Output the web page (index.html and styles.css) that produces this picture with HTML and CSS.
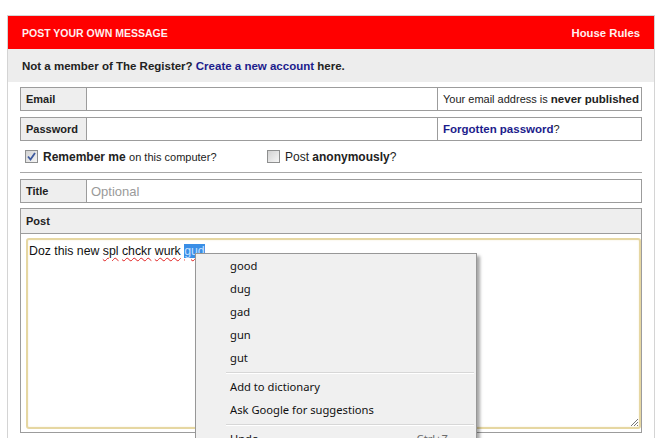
FILE: index.html
```html
<!doctype html>
<html lang="en">
    <head>
        <meta charset="UTF-8" />
        <meta name="viewport" content="width=device-width, initial-scale=1" />

        <link rel="stylesheet" href="styles.css">

        <title>Post your own message</title>
    </head>
    <body>
        <div class="panel">
            <div class="panel-head">
                <span class="head-title">POST YOUR OWN MESSAGE</span>
                <a href="#">House Rules</a>
            </div>
            <div class="member-bar">
                <span>Not a member of The Register? <a href="#">Create a new account</a> here.</span>
            </div>

            <form class="post-form">
                <div class="field-row three">
                    <div class="field-label">Email</div>
                    <div class="field-input"></div>
                    <div class="field-note">
                        <span>Your email address is <b>never published</b></span>
                    </div>
                </div>
                <div class="field-row three">
                    <div class="field-label">Password</div>
                    <div class="field-input"></div>
                    <div class="field-note">
                        <span><a href="#">Forgotten password</a>?</span>
                    </div>
                </div>

                <div class="options">
                    <label class="option">
                        <span class="check checked">
                            <svg width="9" height="9" viewBox="0 0 9 9">
                                <path d="M1 4.5 L3.5 7.5 L8 1" fill="none" stroke="#3e5a9e" stroke-width="1.8" />
                            </svg>
                        </span>
                        <span><b>Remember me</b> <small>on this computer?</small></span>
                    </label>
                    <label class="option">
                        <span class="check"></span>
                        <span>Post <b>anonymously</b>?</span>
                    </label>
                </div>

                <div class="field-row two">
                    <div class="field-label">Title</div>
                    <div class="field-input placeholder">Optional</div>
                </div>

                <div class="post-box">
                    <div class="post-head">Post</div>
                    <div class="post-area">
                        Doz this new <span class="typo">spl</span>
                        <span class="typo">chckr</span>
                        <span class="typo">wurk</span>
                        <span class="typo selected">gud</span>
                        <svg class="grip" width="9" height="9" viewBox="0 0 9 9">
                            <path d="M1 8 L8 1 M4 8 L8 4 M7 8 L8 7" stroke="#777" stroke-width="1" fill="none" />
                        </svg>
                    </div>
                </div>
            </form>
        </div>

        <!-- spellcheck context menu, floats over the textarea -->
        <div class="context-menu">
            <div class="menu-item">good</div>
            <div class="menu-item">dug</div>
            <div class="menu-item">gad</div>
            <div class="menu-item">gun</div>
            <div class="menu-item">gut</div>
            <div class="menu-sep"></div>
            <div class="menu-item">Add to dictionary</div>
            <div class="menu-item">Ask Google for suggestions</div>
            <div class="menu-sep"></div>
            <div class="menu-item"><span>Undo</span><span class="shortcut">Ctrl+Z</span></div>
        </div>
    </body>
</html>
```

FILE: styles.css
```css
html,
body {
    margin: 0;
    padding: 0;
    overflow: hidden;
    background: #fff;
}
body {
    font-family: "Liberation Sans", Arial, sans-serif;
    font-size: 11px;
    color: #222;
}
a {
    color: #1c1c8c;
    text-decoration: none;
}

/* -- PANEL -- */

.panel {
    margin: 15px 0 0 7px;
    width: 646px;
    min-height: 430px;
    border: 1px solid #d4d4d4;
    border-bottom: none;
}
.panel-head {
    height: 33px;
    padding: 0 14px;
    background: #ff0000;
    color: #ffeeee;
    font-weight: bold;
    display: flex;
    align-items: center;
    justify-content: space-between;
}
.head-title {
    font-size: 10.5px;
}
.panel-head a {
    color: #ffeeee;
    font-size: 11.3px;
}
.member-bar {
    height: 33px;
    padding: 0 14px;
    background: #ededed;
    font-size: 11.5px;
    font-weight: bold;
    display: flex;
    align-items: center;
}

/* -- FORM -- */

.post-form {
    padding: 5px 12px 0 12px;
}
.field-row {
    display: grid;
    height: 22px;
    border: 1px solid #9c9c9c;
    margin-bottom: 6px;
}
.field-row.three {
    grid-template-columns: 66px 1fr 204px;
}
.field-row.two {
    grid-template-columns: 66px 1fr;
}
.field-label {
    background: #eeeeee;
    border-right: 1px solid #9c9c9c;
    padding-left: 5px;
    font-weight: bold;
    display: flex;
    align-items: center;
}
.field-input {
    display: flex;
    align-items: center;
    padding-left: 4px;
}
.field-input.placeholder {
    color: #9a9a9a;
    font-size: 13px;
}
.field-note {
    border-left: 1px solid #9c9c9c;
    padding-left: 5px;
    display: flex;
    align-items: center;
    white-space: nowrap;
}
.field-note a {
    font-weight: bold;
    font-size: 11.5px;
}
.field-note b {
    font-size: 11.5px;
}

.options {
    display: grid;
    grid-template-columns: 242px auto;
    height: 31px;
    padding-left: 5px;
    margin-top: -6px;
    margin-bottom: 6px;
    border-bottom: 1px solid #a8a8a8;
    align-items: center;
}
.option {
    display: flex;
    align-items: center;
    gap: 5px;
    font-size: 12px;
}
.option small {
    font-size: 11px;
}
.check {
    width: 11px;
    height: 11px;
    border: 1px solid #8e8f8f;
    background: linear-gradient(135deg, #d2d2d2, #f6f6f6);
    display: flex;
    align-items: center;
    justify-content: center;
}

.post-box {
    border: 1px solid #9c9c9c;
    height: 223px;
    margin-top: -1px;
}
.post-head {
    height: 24px;
    background: #eeeeee;
    border-bottom: 1px solid #9c9c9c;
    padding-left: 5px;
    font-weight: bold;
    display: flex;
    align-items: center;
}
.post-area {
    position: relative;
    margin: 4px 0 0 5px;
    height: 180px;
    border: 2px solid #e6d7a2;
    border-radius: 3px;
    box-shadow: inset 0 0 2px #f4ecd0;
    padding: 4px 2px 3px 1px;
    font-size: 12.3px;
    color: #111;
}
.typo {
    text-decoration: underline wavy #e02020 1px;
    text-underline-offset: 2px;
}
.selected {
    background: #3a8ee6;
    color: #c8e0ff;
}
.grip {
    position: absolute;
    right: 0;
    bottom: 0;
}

/* -- CONTEXT MENU -- */

.context-menu {
    position: absolute;
    left: 195px;
    top: 253px;
    width: 280px;
    padding: 0 0 4px 0;
    background: #f0f0f0;
    border: 1px solid #979797;
    box-shadow: 3px 3px 3px rgba(0, 0, 0, 0.35);
    font-family: "Noto Sans", "Open Sans", sans-serif;
    font-size: 11.2px;
    color: #111;
}
.menu-item {
    height: 23px;
    padding: 0 28px 0 34px;
    display: flex;
    align-items: center;
    justify-content: space-between;
}
.shortcut {
    color: #6d6d6d;
}
.menu-sep {
    height: 1px;
    margin: 3px 2px 1px 30px;
    background: #d7d7d7;
    border-bottom: 1px solid #fff;
}
```
